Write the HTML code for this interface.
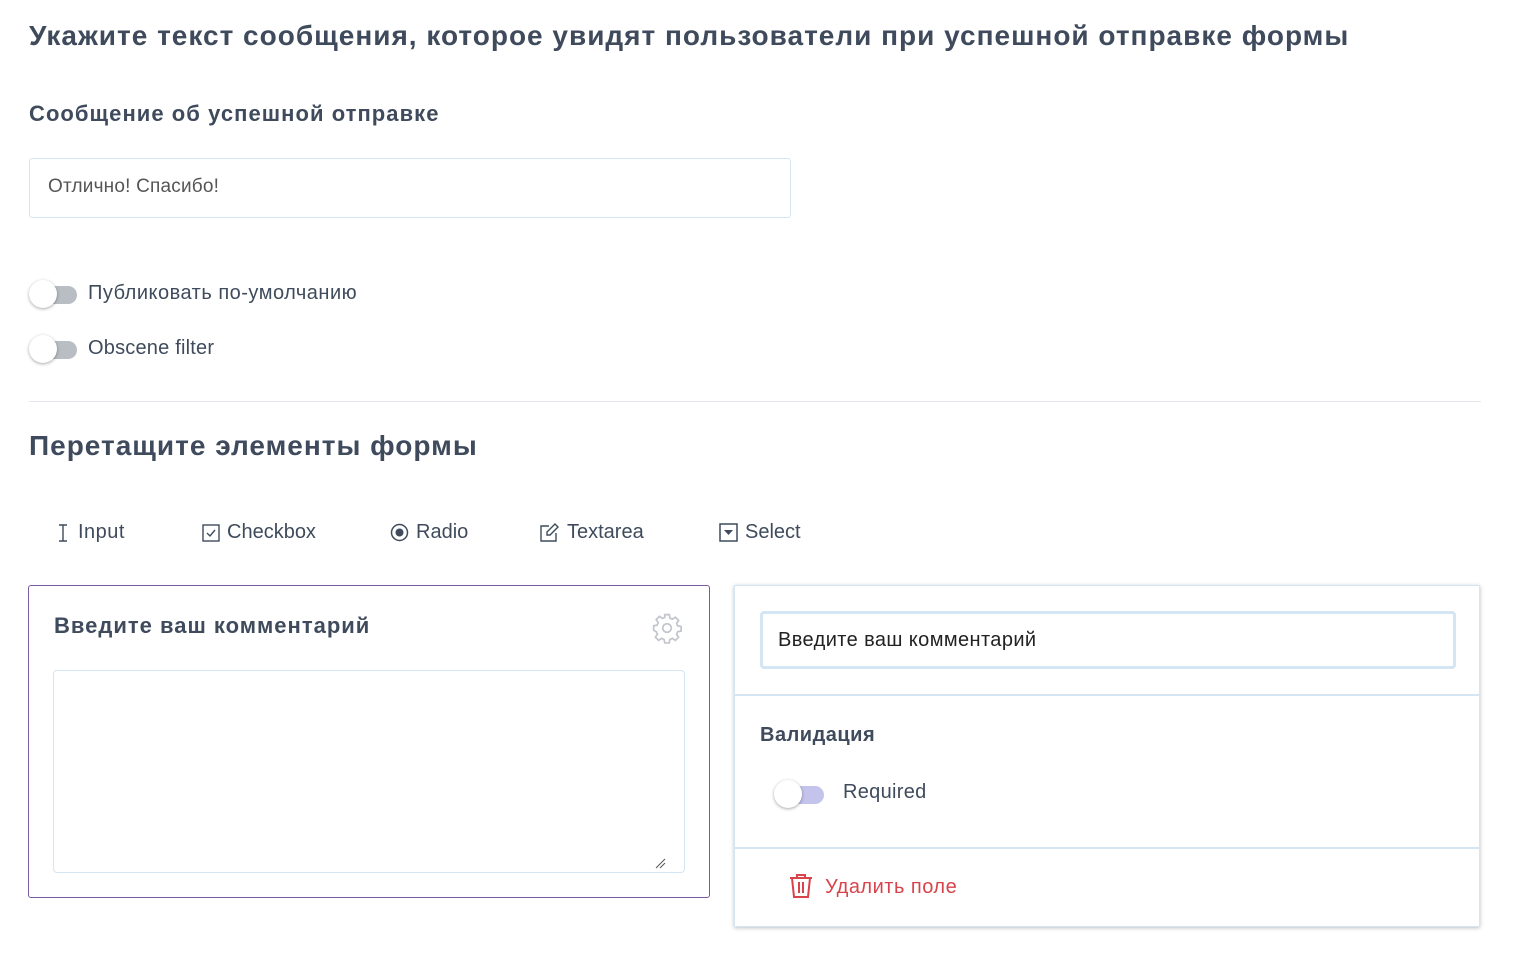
<!DOCTYPE html>
<html><head><meta charset="utf-8"><style>
body{margin:0;background:#fff;font-family:"Liberation Sans",sans-serif;color:#3f4b5c;width:1515px;height:959px;overflow:hidden;position:relative}
.a{position:absolute}
h1{position:absolute;left:29px;top:20px;margin:0;font-size:28px;font-weight:bold;white-space:nowrap;letter-spacing:1px}
.tog{position:absolute;width:48px;height:20px}
.tog .tr{position:absolute;left:10px;top:2px;width:38px;height:18px;border-radius:9px;background:#b9bdc4}
.tog .kn{position:absolute;left:0;top:-4px;width:28px;height:28px;border-radius:50%;background:#fff;box-shadow:0 1px 3px rgba(0,0,0,.35)}
.tb{position:absolute;top:521px;font-size:20px;display:flex;align-items:center;gap:7px}
</style></head><body>
<h1>Укажите текст сообщения, которое увидят пользователи при успешной отправке формы</h1>
<div class="a" style="left:29px;top:101px;font-size:22px;font-weight:bold;letter-spacing:1.05px">Сообщение об успешной отправке</div>
<div class="a" style="left:29px;top:158px;width:762px;height:60px;border:1px solid #d4e6f3;border-radius:3px;box-sizing:border-box;padding:17px 18px;font-size:19px;color:#555;letter-spacing:0.2px">Отлично! Спасибо!</div>
<div class="tog" style="left:29px;top:284px"><div class="tr"></div><div class="kn"></div></div>
<div class="a" style="left:88px;top:282px;font-size:20px;letter-spacing:0.5px">Публиковать по-умолчанию</div>
<div class="tog" style="left:29px;top:339px"><div class="tr"></div><div class="kn"></div></div>
<div class="a" style="left:88px;top:337px;font-size:20px;letter-spacing:0.2px">Obscene filter</div>
<div class="a" style="left:29px;top:401px;width:1452px;height:1px;background:#e4e7eb"></div>
<h1 style="top:430px">Перетащите элементы формы</h1>
<div class="tb" style="left:55px"><svg width="16" height="18" viewBox="0 0 16 18" fill="none" stroke="#3f4b5c" stroke-width="1.4"><path d="M4 1h8M4 17h8M8 1v16"/></svg><span style="letter-spacing:0.5px">Input</span></div>
<div class="tb" style="left:202px"><svg width="18" height="18" viewBox="0 0 18 18" fill="none" stroke="#3f4b5c" stroke-width="1.4"><rect x="1" y="1" width="16" height="16"/><path d="M5 9l3 3 5-6"/></svg>Checkbox</div>
<div class="tb" style="left:390px"><svg width="19" height="19" viewBox="0 0 19 19"><circle cx="9.5" cy="9.5" r="8" fill="none" stroke="#3f4b5c" stroke-width="1.5"/><circle cx="9.5" cy="9.5" r="4" fill="#3f4b5c"/></svg>Radio</div>
<div class="tb" style="left:540px"><svg width="20" height="19" viewBox="0 0 20 19" fill="none" stroke="#3f4b5c" stroke-width="1.4"><path d="M9 3H1v15h15v-8"/><path d="M15 1l3 3-8 8H7V9z"/></svg>Textarea</div>
<div class="tb" style="left:719px"><svg width="19" height="19" viewBox="0 0 19 19"><rect x="1" y="1" width="17" height="17" fill="none" stroke="#3f4b5c" stroke-width="1.5"/><path d="M5 7h9l-4.5 5z" fill="#3f4b5c"/></svg>Select</div>
<div class="a" style="left:28px;top:585px;width:682px;height:313px;border:1px solid #7b5aa0;border-radius:3px;box-sizing:border-box">
<div class="a" style="left:25px;top:27px;font-size:22px;font-weight:bold;letter-spacing:1px">Введите ваш комментарий</div>
<svg class="a" style="left:622px;top:26px" width="32" height="32" viewBox="0 0 24 24" fill="none" stroke="#c2c6cc" stroke-width="1.3"><circle cx="12" cy="12" r="3.2"/><path d="M10.3 2h3.4l.5 2.6 1.9.8 2.2-1.5 2.4 2.4-1.5 2.2.8 1.9 2.6.5v3.4l-2.6.5-.8 1.9 1.5 2.2-2.4 2.4-2.2-1.5-1.9.8-.5 2.6h-3.4l-.5-2.6-1.9-.8-2.2 1.5-2.4-2.4 1.5-2.2-.8-1.9L2 13.7v-3.4l2.6-.5.8-1.9-1.5-2.2 2.4-2.4 2.2 1.5 1.9-.8z"/></svg>
<div class="a" style="left:24px;top:84px;width:632px;height:203px;border:1px solid #d4e6f3;border-radius:4px;box-sizing:border-box"><svg class="a" style="right:18px;bottom:3px" width="12" height="12"><path d="M2 11L11 2M6 11l5-5" stroke="#555" stroke-width="1"/></svg></div>
</div>
<div class="a" style="left:734px;top:585px;width:746px;height:342px;border:1px solid #d4e6f3;box-sizing:border-box;box-shadow:0 1px 4px rgba(0,0,0,.25);background:#fff">
<div class="a" style="left:25px;top:25px;width:696px;height:58px;border:3px solid #d4e6f3;border-radius:4px;box-sizing:border-box;padding:15px 15px;font-size:20px;color:#222;letter-spacing:0.4px">Введите ваш комментарий</div>
<div class="a" style="left:0;top:108px;width:744px;height:2px;background:#d4e6f3"></div>
<div class="a" style="left:25px;top:138px;font-size:20px;font-weight:bold;letter-spacing:0.5px">Валидация</div>
<div class="tog" style="left:39px;top:198px"><div class="tr" style="background:#c4c3ec;width:40px"></div><div class="kn"></div></div>
<div class="a" style="left:108px;top:195px;font-size:20px;letter-spacing:0.3px">Required</div>
<div class="a" style="left:0;top:261px;width:744px;height:2px;background:#d4e6f3"></div>
<svg class="a" style="left:54px;top:287px" width="24" height="26" viewBox="0 0 24 26" fill="none" stroke="#d9434b" stroke-width="2"><path d="M1 5h22M8 5V2h8v3M3 5l2 19h14l2-19M10 9v11M14 9v11"/></svg>
<div class="a" style="left:90px;top:290px;font-size:20px;color:#d9434b;letter-spacing:0.5px">Удалить поле</div>
</div>
</body></html>
